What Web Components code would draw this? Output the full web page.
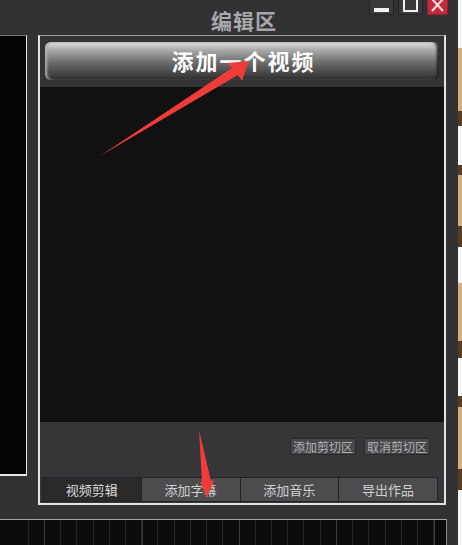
<!DOCTYPE html>
<html>
<head>
<meta charset="utf-8">
<style>
html, body { margin: 0; height: 100%; background: #323235; overflow: hidden; }
body { font-family: "Liberation Sans", "Noto Sans CJK SC", sans-serif; }
</style>
</head>
<body>
<editor-app>
  <win-controls slot="controls"></win-controls>
  <editor-panel slot="editor">
    <big-button slot="top">添加一个视频</big-button>
    <small-button slot="actions">添加剪切区</small-button>
    <small-button slot="actions">取消剪切区</small-button>
    <tab-bar slot="tabs">
      <tab-item active>视频剪辑</tab-item>
      <tab-item>添加字幕</tab-item>
      <tab-item>添加音乐</tab-item>
      <tab-item>导出作品</tab-item>
    </tab-bar>
  </editor-panel>
</editor-app>

<script>
const appTemplate = document.createElement('template');
appTemplate.innerHTML = `<style>
:host {
    display: grid;
    position: relative;
    width: 462px;
    height: 545px;
    overflow: hidden;
    grid-template-columns: 27px 408px 1fr;
    grid-template-rows: 35px 470px 1fr;
    column-gap: 11px;
    background: #323235;
}
.head {
    grid-column: 1 / -1;
    grid-row: 1;
    display: grid;
    grid-template-columns: 38px 408px 1fr;
}
h1 {
    grid-column: 2;
    grid-row: 1;
    margin: 9px 0 0;
    padding-left: 4px;
    text-align: center;
    font-size: 21px;
    line-height: 25px;
    letter-spacing: 1px;
    font-weight: bold;
    color: #a8a8ab;
}
.ctl {
    grid-column: 1 / -1;
    grid-row: 1;
    justify-self: end;
    align-self: start;
    margin-right: 14px;
}
.left {
    grid-column: 1;
    grid-row: 2;
    height: 441px;
    background: #040404;
    border: solid #e8e8e8;
    border-width: 1px 1px 2px 0;
    border-top-color: #77777a;
    box-sizing: border-box;
}
::slotted(editor-panel) { grid-column: 2; grid-row: 2; }
.strip {
    width: 4px;
    justify-self: end;
    grid-row: 1 / 4;
    grid-column: 3;
    background: linear-gradient(#f4f4f4 0 48px, #d9ad78 48px 111px, #5a3a1c 111px 126px, #f6f6f6 126px 165px, #5a3a1c 165px 175px, #d9ad78 175px 226px, #5a3a1c 226px 247px, #f6f6f6 247px 283px, #d9ad78 283px 341px, #5a3a1c 341px 358px, #f6f6f6 358px 396px, #5a3a1c 396px 407px, #d9ad78 407px 469px, #5a3a1c 469px 490px, #f4f4f4 490px);
}
.time {
    grid-column: 1 / 4;
    grid-row: 3;
    margin-top: 14px;
    width: 447px;
    box-sizing: border-box;
    border-top: 1px solid #a5a5a7;
    border-right: 1px solid #8a8a8c;
    background:
        repeating-linear-gradient(90deg, transparent 0 44.5px, #3c3c3e 44.5px 45.5px, transparent 45.5px 97.3px),
        repeating-linear-gradient(90deg, transparent 0 11.5px, #262628 11.5px 12.5px, transparent 12.5px 16.22px),
        #0b0b0c;
}
svg { position: absolute; left: 0; top: 0; pointer-events: none; }
</style>
<div class="head">
    <h1>编辑区</h1>
    <div class="ctl"><slot name="controls"></slot></div>
</div>
<div class="left"></div>
<slot name="editor"></slot>
<div class="strip"></div>
<div class="time"></div>
<svg width="462" height="545" viewBox="0 0 462 545">
    <path d="M100 156 L232 68 L227 63 L249 61 L242 81 L238 75 Z" fill="#f03b3b"/>
    <path d="M199 430 L202 482 L200 482 L207 498 L214 480 L211 481 Z" fill="#f03b3b"/>
</svg>
`;
customElements.define('editor-app', class EditorApp extends HTMLElement {
    constructor() {
        super();
        this.attachShadow({ mode: 'open' }).appendChild(appTemplate.content.cloneNode(true));
    }
});

const controlsTemplate = document.createElement('template');
controlsTemplate.innerHTML = `<style>
:host { display: flex; gap: 4px; }
div {
    width: 25px;
    height: 15px;
    box-sizing: border-box;
    background: #3a3a3d;
    border: 1px solid #242426;
    border-top: 0;
    display: flex;
    justify-content: center;
}
.close { width: 21px; background: #c52a3c; border-color: #8f2030; }
svg { display: block; }
</style>
<div><svg width="15" height="14" viewBox="0 0 15 14"><rect x="0" y="8" width="15" height="4" fill="#f2f2f2"/></svg></div>
<div><svg width="15" height="14" viewBox="0 0 15 14"><rect x="1" y="-1" width="13" height="12" fill="none" stroke="#f2f2f2" stroke-width="2"/></svg></div>
<div class="close"><svg width="15" height="14" viewBox="0 0 15 14"><path d="M2 -1 L13 11 M13 -1 L2 11" stroke="#f6dfe0" stroke-width="2"/></svg></div>
`;
customElements.define('win-controls', class WinControls extends HTMLElement {
    constructor() {
        super();
        this.attachShadow({ mode: 'open' }).appendChild(controlsTemplate.content.cloneNode(true));
    }
});

const panelTemplate = document.createElement('template');
panelTemplate.innerHTML = `<style>
:host {
    display: flex;
    flex-direction: column;
    box-sizing: border-box;
    height: 470px;
    border: solid #e4e4e4;
    border-width: 1px 2px 2px 2px;
    border-top-color: #9a9a9c;
    background: #363639;
}
.top { height: 51px; box-sizing: border-box; padding: 6px 5px 0 5px; background: #333336; }
.video { flex: 1; background: #111112; }
.bottom { height: 81px; box-sizing: border-box; padding: 16px 14px 0 2px; display: flex; flex-direction: column; }
.actions { display: flex; justify-content: flex-end; gap: 8px; }
.tabs { margin-top: 22px; }
</style>
<div class="top"><slot name="top"></slot></div>
<div class="video"></div>
<div class="bottom">
    <div class="actions"><slot name="actions"></slot></div>
    <div class="tabs"><slot name="tabs"></slot></div>
</div>
`;
customElements.define('editor-panel', class EditorPanel extends HTMLElement {
    constructor() {
        super();
        this.attachShadow({ mode: 'open' }).appendChild(panelTemplate.content.cloneNode(true));
    }
});

const bigTemplate = document.createElement('template');
bigTemplate.innerHTML = `<style>
:host {
    display: flex;
    align-items: center;
    justify-content: center;
    height: 38px;
    box-sizing: border-box;
    padding: 0 0 3px 3px;
    border-radius: 6px;
    background: linear-gradient(#e2e2e2 0, #a8a8a8 22%, #6a6a6a 55%, #3c3c3c 90%, #2a2a2a 100%);
    box-shadow: inset 3px 0 3px -1px #b0b0b0, inset -3px 0 3px -1px #1e1e1e;
    color: #fff;
    font-weight: bold;
    font-size: 22px;
    letter-spacing: 2px;
}
</style><slot></slot>`;
customElements.define('big-button', class BigButton extends HTMLElement {
    constructor() {
        super();
        this.attachShadow({ mode: 'open' }).appendChild(bigTemplate.content.cloneNode(true));
    }
});

const smallTemplate = document.createElement('template');
smallTemplate.innerHTML = `<style>
:host {
    display: flex;
    align-items: center;
    justify-content: center;
    width: 66px;
    height: 17px;
    box-sizing: border-box;
    background: #48484b;
    border: 1px solid #29292b;
    border-radius: 1px;
    color: #b2b2b4;
    font-size: 12px;
}
</style><slot></slot>`;
customElements.define('small-button', class SmallButton extends HTMLElement {
    constructor() {
        super();
        this.attachShadow({ mode: 'open' }).appendChild(smallTemplate.content.cloneNode(true));
    }
});

const tabBarTemplate = document.createElement('template');
tabBarTemplate.innerHTML = `<style>
:host {
    display: grid;
    grid-template-columns: repeat(4, 1fr);
    width: 396px;
    height: 25px;
    box-sizing: border-box;
    background: #242426;
    border: 1px solid #242426;
    gap: 1px;
}
</style><slot></slot>`;
customElements.define('tab-bar', class TabBar extends HTMLElement {
    constructor() {
        super();
        this.attachShadow({ mode: 'open' }).appendChild(tabBarTemplate.content.cloneNode(true));
    }
});

const tabTemplate = document.createElement('template');
tabTemplate.innerHTML = `<style>
:host {
    display: flex;
    align-items: center;
    justify-content: center;
    background: #4c4c4f;
    color: #d0d0d0;
    font-size: 13px;
}
:host([active]) { background: #2a2a2b; color: #dcdcdc; }
</style><slot></slot>`;
customElements.define('tab-item', class TabItem extends HTMLElement {
    constructor() {
        super();
        this.attachShadow({ mode: 'open' }).appendChild(tabTemplate.content.cloneNode(true));
    }
});
</script>
</body>
</html>
